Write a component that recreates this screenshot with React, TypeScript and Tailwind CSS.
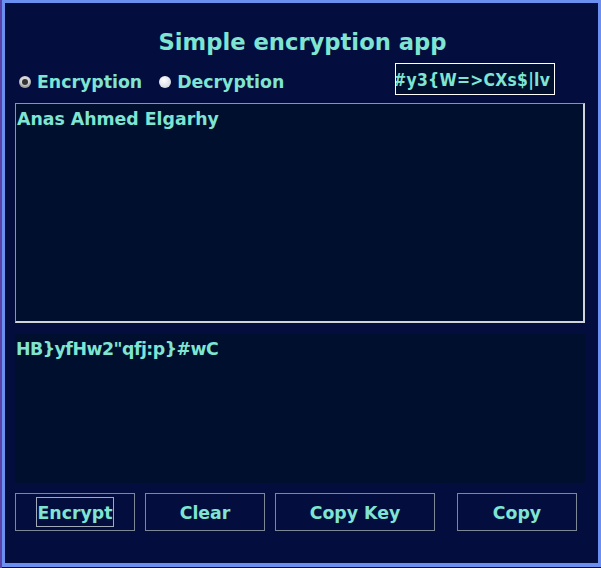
import React from "react";

const font = { fontFamily: '"DejaVu Sans", "Liberation Sans", sans-serif' };
const cond = { fontFamily: '"DejaVu Sans Condensed", "DejaVu Sans", sans-serif', fontStretch: "condensed" as const };

export default function App() {
  return (
    <div className="w-[601px] h-[568px] bg-[#0a0a2a] flex" style={font}>
      <div className="w-[2px] h-full bg-[#5a40a8]" />
      <div className="flex-1 h-[567px] border-t-[3px] border-l-[3px] border-r-[3px] border-b-[4px] border-[#6a8ff0] bg-[#030e3e] flex flex-col text-[#7fe5d2] font-bold">
        <div className="h-[25px]" />
        <div className="text-[22.67px] leading-[28px] text-center pl-[2px]">Simple encryption app</div>
        <div className="h-[7px]" />
        <div className="flex items-center h-[32px] pl-[14px]">
          <div className="flex items-center mt-[5px]">
            <div className="w-[12px] h-[12px] rounded-full bg-[#d8d8d8] flex items-center justify-center shadow-[inset_0_-2px_2px_rgba(0,0,0,0.3)]">
              <div className="w-[6px] h-[6px] rounded-full bg-[#333]" />
            </div>
            <span className="ml-[6px] text-[17.33px] leading-[22px]">Encryption</span>
          </div>
          <div className="flex items-center mt-[5px] ml-[17px]">
            <div className="w-[12px] h-[12px] rounded-full bg-[radial-gradient(circle_at_40%_35%,#ffffff,#c8ccd8)]" />
            <span className="ml-[6px] text-[17.33px] leading-[22px]">Decryption</span>
          </div>
          <div className="ml-[111px] w-[160px] h-[32px] border border-white bg-[#000f2e] overflow-hidden flex items-center">
            <span className="text-[17.33px] leading-[22px] whitespace-nowrap -ml-[3px] mt-[1px] tracking-[0.25px]" style={cond}>#y3{"{"}W=&gt;CXs$|lv</span>
          </div>
        </div>
        <div className="h-[8px]" />
        <div className="ml-[10px] w-[570px] h-[220px] bg-[#000f2e] border-t border-l border-[#8a94a6] border-r-2 border-b-2 border-r-[#d0d4da] border-b-[#d0d4da] pl-[1px] pt-[4px]">
          <div className="text-[17.33px] leading-[22px]">Anas Ahmed Elgarhy</div>
        </div>
        <div className="h-[11px]" />
        <div className="ml-[10px] w-[570px] h-[149px] bg-[#000f2d] pl-[1px] pt-[4px]">
          <div className="text-[17.33px] leading-[22px] tracking-[-0.5px]">HB{"}"}yfHw2"qfj:p{"}"}#wC</div>
        </div>
        <div className="h-[10px]" />
        <div className="flex pl-[10px] h-[38px]">
          <div className="w-[120px] h-[38px] border border-[#7d8796] flex items-center justify-center">
            <div className="border border-[#a0aab8] h-[30px] px-[1px] pt-[2px] flex items-center text-[17.33px] leading-[22px]">Encrypt</div>
          </div>
          <div className="ml-[10px] w-[120px] h-[38px] border border-[#7d8796] flex items-center justify-center pt-[2px] text-[17.33px] leading-[22px]">Clear</div>
          <div className="ml-[10px] w-[160px] h-[38px] border border-[#7d8796] flex items-center justify-center pt-[2px] text-[17.33px] leading-[22px]">Copy Key</div>
          <div className="ml-[22px] w-[120px] h-[38px] border border-[#7d8796] flex items-center justify-center pt-[2px] text-[17.33px] leading-[22px]">Copy</div>
        </div>
      </div>
    </div>
  );
}
